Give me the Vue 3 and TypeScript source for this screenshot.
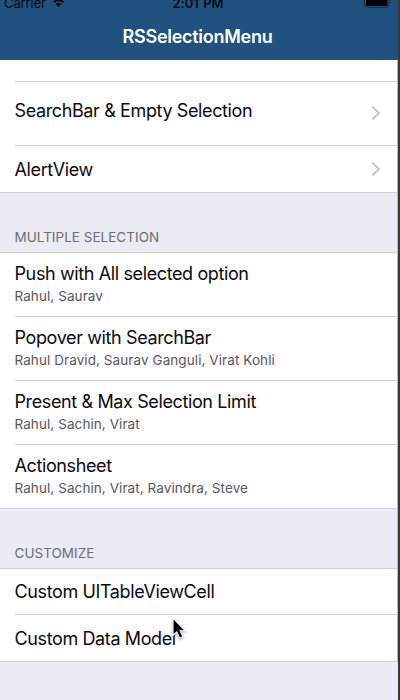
<script setup lang="ts">
interface Row {
  title: string
  detail?: string
  arrow?: boolean
  raised?: boolean
  size: 'tall' | 'short'
}
interface Section {
  heading?: string
  rows: Row[]
}

const sections: Section[] = [
  {
    rows: [
      { title: 'SearchBar & Empty Selection', arrow: true, raised: true, size: 'tall' },
      { title: 'AlertView', arrow: true, size: 'short' },
    ],
  },
  {
    heading: 'MULTIPLE SELECTION',
    rows: [
      { title: 'Push with All selected option', detail: 'Rahul, Saurav', size: 'tall' },
      { title: 'Popover with SearchBar', detail: 'Rahul Dravid, Saurav Ganguli, Virat Kohli', size: 'tall' },
      { title: 'Present & Max Selection Limit', detail: 'Rahul, Sachin, Virat', size: 'tall' },
      { title: 'Actionsheet', detail: 'Rahul, Sachin, Virat, Ravindra, Steve', size: 'tall' },
    ],
  },
  {
    heading: 'CUSTOMIZE',
    rows: [
      { title: 'Custom UITableViewCell', size: 'short' },
      { title: 'Custom Data Model', size: 'short' },
    ],
  },
]
</script>

<template>
  <div class="device">
    <header class="navbar">
      <div class="status">
        <div class="carrier">
          <span>Carrier</span>
          <svg class="wifi" width="17" height="12" viewBox="0 0 17 12">
            <path d="M1 4.6a10.6 10.6 0 0 1 15 0M3.7 7.3a6.8 6.8 0 0 1 9.6 0" fill="none" stroke="#050b12" stroke-width="2" />
            <path d="M8.5 12 5.5 9.2a4.3 4.3 0 0 1 6 0z" fill="#050b12" />
          </svg>
        </div>
        <span class="clock">2:01 PM</span>
        <svg class="battery" width="28" height="13" viewBox="0 0 28 13">
          <rect x=".5" y=".5" width="24.5" height="12" rx="3" fill="none" stroke="#12304f" />
          <rect x="2" y="2" width="21.5" height="9" rx="1.2" fill="#000" />
          <path d="M26.3 4.5q1.5 2 0 4z" fill="#12304f" />
        </svg>
      </div>
      <h1>RSSelectionMenu</h1>
    </header>

    <main>
      <div class="clipped"></div>
      <section v-for="(section, i) in sections" :key="i">
        <h2 v-if="section.heading">{{ section.heading }}</h2>
        <ul>
          <li v-for="row in section.rows" :key="row.title" :class="row.size">
            <div class="content">
              <div class="labels" :class="{ raised: row.raised }">
                <span class="title">{{ row.title }}</span>
                <span v-if="row.detail" class="detail">{{ row.detail }}</span>
              </div>
              <svg v-if="row.arrow" class="chevron" width="10" height="16" viewBox="0 0 10 16">
                <path d="M1.4 1.6 8 8l-6.6 6.4" fill="none" stroke="#c3c3c8" stroke-width="1.9" />
              </svg>
            </div>
          </li>
        </ul>
      </section>
    </main>

    <svg class="pointer" width="20" height="26" viewBox="0 0 20 26">
      <path d="M3 2.2v17l3.8-3.3 2.9 6.3 3.2-1.4-2.8-6.1h5z" fill="#000" stroke="#fff" stroke-width="1.1" />
    </svg>
  </div>
</template>

<style>
body {
  margin: 0;
  overflow: hidden;
}
</style>

<style scoped>
.device {
  position: relative;
  box-sizing: border-box;
  width: 400px;
  height: 700px;
  overflow: hidden;
  border-right: 2px solid #373a39;
  background: #ebebf4;
  font-family: Inter, "Liberation Sans", sans-serif;
  color: #0b0b0d;
}
.navbar {
  height: 60px;
  overflow: hidden;
  background: #21527f;
}
.status {
  display: grid;
  grid-template-columns: 1fr auto 1fr;
  align-items: start;
  height: 10px;
  margin-top: -5px;
  padding: 0 6px 0 4px;
  color: #050b12;
  font-size: 13px;
  line-height: 16px;
}
.carrier {
  display: flex;
  align-items: flex-start;
  gap: 4px;
  letter-spacing: -0.1px;
}
.wifi {
  flex: none;
}
.clock {
  font-weight: 600;
  letter-spacing: -0.1px;
  word-spacing: 1.5px;
}
.battery {
  justify-self: end;
}
h1 {
  margin: 20px 0 0;
  padding-right: 3px;
  color: #fff;
  font-size: 18px;
  font-weight: 600;
  letter-spacing: -0.27px;
  line-height: 24px;
  text-align: center;
}
main {
  border-right: 1px solid #b9b9c0;
}
.clipped {
  height: 22px;
  background: linear-gradient(#d2d2d8, #d2d2d8) 15px 100% / 100% 1px no-repeat #fefdff;
}
h2 {
  display: flex;
  align-items: flex-end;
  box-sizing: border-box;
  height: 60px;
  margin: 0;
  padding: 0 0 6px 14.5px;
  border-bottom: 1px solid #d0d0d6;
  color: #6d6d72;
  font-size: 13.5px;
  font-weight: 400;
  letter-spacing: 0.02px;
  line-height: 18px;
}
ul {
  margin: 0;
  padding: 0;
  list-style: none;
  background: #fefdff;
}
li {
  padding-left: 14.5px;
}
.content {
  display: flex;
  align-items: center;
  justify-content: space-between;
  box-sizing: border-box;
  height: 64px;
  padding-right: 16px;
  border-bottom: 1px solid #d2d2d8;
}
.short .content {
  height: 46px;
}
li:last-child {
  border-bottom: 1px solid #d0d0d6;
}
li:last-child .content {
  height: 63px;
  border-bottom: 0;
}
li.short:last-child .content {
  height: 46px;
}
.labels {
  display: flex;
  flex-direction: column;
  white-space: nowrap;
}
li.short:last-child .labels {
  padding-top: 2px;
}
.raised {
  padding-bottom: 5px;
}
.raised + .chevron {
  margin-bottom: 1px;
}
.title {
  font-size: 18px;
  letter-spacing: -0.38px;
  line-height: 24px;
}
.detail {
  color: #58585c;
  font-size: 13.5px;
  letter-spacing: 0.08px;
  line-height: 20px;
  padding-bottom: 2px;
}
.chevron {
  flex: none;
}
.pointer {
  position: absolute;
  left: 170px;
  top: 616px;
  filter: drop-shadow(0 1px 1px rgba(0, 0, 0, 0.35));
}
</style>
